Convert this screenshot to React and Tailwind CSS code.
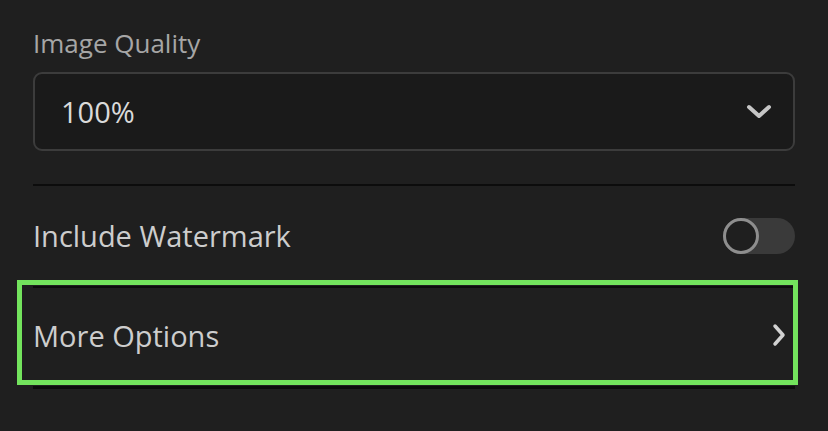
export default function App() {
  return (
    <div
      className="relative w-[828px] h-[431px] bg-[#1f1f1f] px-[33px] pt-[24px] overflow-hidden"
      style={{ fontFamily: '"Open Sans", "Noto Sans", sans-serif' }}
    >
      <div className="text-[26px] leading-[38px] text-[#a6a6a6]">Image Quality</div>
      <div className="mt-[10px] h-[79px] rounded-[9px] border-2 border-[#3c3c3c] bg-[#1a1a1a] flex items-center justify-between pl-[26px] pr-[21px]">
        <span className="text-[29px] leading-none text-[#dadada]">100%</span>
        <svg width="26" height="18" viewBox="0 0 26 18" fill="none">
          <path d="M3 4 L13 13 L23 4" stroke="#c6c6c6" strokeWidth="4" strokeLinecap="round" strokeLinejoin="round" />
        </svg>
      </div>
      <div className="h-[33px]" />
      <div className="h-[2px] bg-[#0c0c0c]" />
      <div className="h-[100px] flex items-center justify-between">
        <span className="text-[29px] leading-none text-[#cdcdcd] -mt-[2px]">Include Watermark</span>
        <div className="relative w-[72px] h-[36px] rounded-full bg-[#3a3a3a]">
          <div className="absolute left-0 top-0 w-[36px] h-[36px] rounded-full border-[3px] border-[#8e8e8e] bg-[#1f1f1f]" />
        </div>
      </div>
      <div className="h-[2px] bg-[#0c0c0c]" />
      <div className="h-[98px] flex items-center justify-between pr-[8px]">
        <span className="text-[29px] leading-none text-[#cdcdcd] -mt-[4px]">More Options</span>
        <svg width="16" height="24" viewBox="0 0 16 24" fill="none" className="-mt-[4px]">
          <path d="M4 3 L12 12 L4 21" stroke="#d2d2d2" strokeWidth="3.5" strokeLinecap="round" strokeLinejoin="round" />
        </svg>
      </div>
      <div className="h-[3px] bg-[#0c0c0c]" />
      <div className="absolute left-[17px] top-[280px] w-[781px] h-[105px] border-[5px] border-[#73e35d] pointer-events-none" />
    </div>
  );
}
